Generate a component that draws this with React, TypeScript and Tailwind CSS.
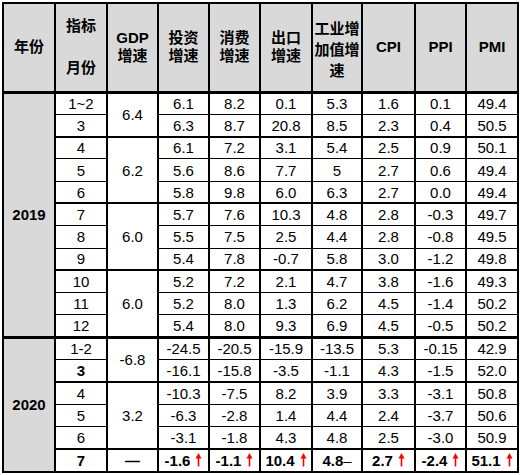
import React from "react";

type Row = {
  month: string;
  values: string[];
  boldMonth?: boolean;
};

const rows2019: Row[] = [
  { month: "1~2", values: ["6.1", "8.2", "0.1", "5.3", "1.6", "0.1", "49.4"] },
  { month: "3", values: ["6.3", "8.7", "20.8", "8.5", "2.3", "0.4", "50.5"] },
  { month: "4", values: ["6.1", "7.2", "3.1", "5.4", "2.5", "0.9", "50.1"] },
  { month: "5", values: ["5.6", "8.6", "7.7", "5", "2.7", "0.6", "49.4"] },
  { month: "6", values: ["5.8", "9.8", "6.0", "6.3", "2.7", "0.0", "49.4"] },
  { month: "7", values: ["5.7", "7.6", "10.3", "4.8", "2.8", "-0.3", "49.7"] },
  { month: "8", values: ["5.5", "7.5", "2.5", "4.4", "2.8", "-0.8", "49.5"] },
  { month: "9", values: ["5.4", "7.8", "-0.7", "5.8", "3.0", "-1.2", "49.8"] },
  { month: "10", values: ["5.2", "7.2", "2.1", "4.7", "3.8", "-1.6", "49.3"] },
  { month: "11", values: ["5.2", "8.0", "1.3", "6.2", "4.5", "-1.4", "50.2"] },
  { month: "12", values: ["5.4", "8.0", "9.3", "6.9", "4.5", "-0.5", "50.2"] },
];

const rows2020: Row[] = [
  { month: "1-2", values: ["-24.5", "-20.5", "-15.9", "-13.5", "5.3", "-0.15", "42.9"] },
  { month: "3", boldMonth: true, values: ["-16.1", "-15.8", "-3.5", "-1.1", "4.3", "-1.5", "52.0"] },
  { month: "4", values: ["-10.3", "-7.5", "8.2", "3.9", "3.3", "-3.1", "50.8"] },
  { month: "5", values: ["-6.3", "-2.8", "1.4", "4.4", "2.4", "-3.7", "50.6"] },
  { month: "6", values: ["-3.1", "-1.8", "4.3", "4.8", "2.5", "-3.0", "50.9"] },
];

const gdp2019: Record<number, [string, number]> = {
  0: ["6.4", 2],
  2: ["6.2", 3],
  5: ["6.0", 3],
  8: ["6.0", 3],
};

const gdp2020: Record<number, [string, number]> = {
  0: ["-6.8", 2],
  2: ["3.2", 3],
};

const widths = [51, 52, 51, 51, 51, 52, 50, 53, 51, 51];

const cell = "border-x-2 border-y border-black p-0 text-center align-middle leading-[17px]";
const head = "border-2 border-black bg-[#d9d9d9] p-0 text-center align-middle font-bold";

function UpArrow() {
  return (
    <svg width="7" height="14" viewBox="0 0 7 14" className="inline-block">
      <line x1="3.5" y1="13.5" x2="3.5" y2="3" stroke="#f00" strokeWidth="1.6" />
      <polygon points="0.5,5.5 3.5,0 6.5,5.5" fill="#f00" />
    </svg>
  );
}

function Up({ v }: { v: string }) {
  return (
    <span className="inline-flex items-center gap-[5px]">
      <span className="font-bold">{v}</span>
      <UpArrow />
    </span>
  );
}

function Section({
  year,
  rows,
  gdp,
  extra,
}: {
  year: string;
  rows: Row[];
  gdp: Record<number, [string, number]>;
  extra?: React.ReactNode;
}) {
  const total = rows.length + (extra ? 1 : 0);
  return (
    <>
      {rows.map((r, i) => {
        const groupTop = i === 0 ? "border-t-[3px]" : gdp[i] ? "border-t-2" : "";
        return (
          <tr key={year + r.month} className="h-[22.3px]">
            {i === 0 && (
              <td
                rowSpan={total}
                className={`${cell} border-t-[3px] bg-[#d9d9d9] font-bold`}
              >
                {year}
              </td>
            )}
            <td className={`${cell} ${groupTop} ${r.boldMonth ? "font-bold" : ""}`}>
              {r.month}
            </td>
            {gdp[i] && (
              <td rowSpan={gdp[i][1]} className={`${cell} ${groupTop}`}>
                {gdp[i][0]}
              </td>
            )}
            {r.values.map((v, j) => (
              <td key={j} className={`${cell} ${groupTop}`}>
                {v}
              </td>
            ))}
          </tr>
        );
      })}
      {extra}
    </>
  );
}

export default function App() {
  return (
    <div className="bg-white w-[522px] h-[475px] pl-[2px] pt-[2px]">
      <div
        className="w-[517px] border-2 border-black text-[15px] text-black"
        style={{ fontFamily: '"Liberation Sans", "Noto Sans CJK SC", Arial, sans-serif' }}
      >
        <table className="w-full table-fixed border-collapse border-hidden">
          <colgroup>
            {widths.map((w, i) => (
              <col key={i} style={{ width: w }} />
            ))}
          </colgroup>
          <thead>
            <tr className="h-[88px]">
              <th className={head}>年份</th>
              <th className={head}>
                <div className="flex flex-col items-center gap-[24px] leading-[18px]">
                  <span>指标</span>
                  <span>月份</span>
                </div>
              </th>
              <th className={`${head} leading-[18px]`}>
                GDP
                <br />
                增速
              </th>
              <th className={`${head} leading-[18px]`}>
                投资
                <br />
                增速
              </th>
              <th className={`${head} leading-[18px]`}>
                消费
                <br />
                增速
              </th>
              <th className={`${head} leading-[18px]`}>
                出口
                <br />
                增速
              </th>
              <th className={`${head} leading-[21px] pt-[5px]`}>
                工业增
                <br />
                加值增
                <br />
                速
              </th>
              <th className={head}>CPI</th>
              <th className={head}>PPI</th>
              <th className={head}>PMI</th>
            </tr>
          </thead>
          <tbody>
            <Section year="2019" rows={rows2019} gdp={gdp2019} />
            <Section
              year="2020"
              rows={rows2020}
              gdp={gdp2020}
              extra={
                <tr className="h-[22.3px]">
                  <td className={`${cell} border-t-2 font-bold`}>7</td>
                  <td className={`${cell} border-t-2 font-bold`}>—</td>
                  <td className={`${cell} border-t-2`}>
                    <Up v="-1.6" />
                  </td>
                  <td className={`${cell} border-t-2`}>
                    <Up v="-1.1" />
                  </td>
                  <td className={`${cell} border-t-2`}>
                    <Up v="10.4" />
                  </td>
                  <td className={`${cell} border-t-2`}>
                    <span className="font-bold">4.8</span>
                    <span>–</span>
                  </td>
                  <td className={`${cell} border-t-2`}>
                    <Up v="2.7" />
                  </td>
                  <td className={`${cell} border-t-2`}>
                    <Up v="-2.4" />
                  </td>
                  <td className={`${cell} border-t-2`}>
                    <Up v="51.1" />
                  </td>
                </tr>
              }
            />
          </tbody>
        </table>
      </div>
    </div>
  );
}
